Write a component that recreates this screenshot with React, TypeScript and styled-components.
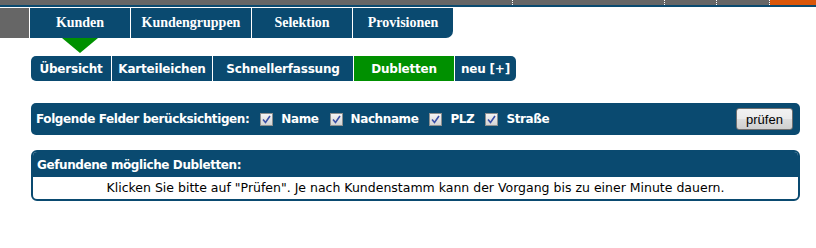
import styled, { createGlobalStyle } from "styled-components";

const blue = "#0a4a70";
const green = "#009000";

const GlobalStyle = createGlobalStyle`
  body {
    margin: 0;
    background: #fff;
    font-family: "DejaVu Sans", Verdana, sans-serif;
  }
`;

const TopStrip = styled.div`
  display: flex;
  height: 5px;
  border-bottom: 2px solid ${blue};
`;

const StripPart = styled.div<{ $w?: number; $orange?: boolean }>`
  flex: ${(p) => (p.$w ? `0 0 ${p.$w}px` : "1")};
  background: ${(p) => (p.$orange ? "#d9560a" : "#666")};
  border-right: 1px dotted #fff;
  &:last-child {
    border-right: none;
  }
`;

const NavRow = styled.div`
  display: flex;
  margin-top: 1px;
  height: 30px;
`;

const NavStub = styled.div`
  width: 29px;
  background: #666;
  margin-right: 1px;
`;

const NavTab = styled.div<{ $w: number; $last?: boolean }>`
  position: relative;
  width: ${(p) => p.$w}px;
  margin-right: 1px;
  background: ${blue};
  color: #fff;
  font-family: "Liberation Serif", "Times New Roman", serif;
  font-weight: bold;
  font-size: 14px;
  display: flex;
  align-items: center;
  justify-content: center;
  border-bottom-right-radius: ${(p) => (p.$last ? "7px" : "0")};
`;

const Arrow = styled.span`
  position: absolute;
  left: 50%;
  top: 30px;
  margin-left: -18px;
  width: 0;
  height: 0;
  border-left: 18px solid transparent;
  border-right: 18px solid transparent;
  border-top: 15px solid ${green};
`;

const Content = styled.div`
  padding: 18px 16px 0 31px;
`;

const SubNav = styled.div`
  display: flex;
  height: 25px;
  margin-bottom: 22px;
`;

const SubTab = styled.div<{ $w: number; $active?: boolean }>`
  width: ${(p) => p.$w}px;
  margin-right: 1px;
  background: ${(p) => (p.$active ? green : blue)};
  color: #fff;
  font-weight: bold;
  font-size: 12px;
  letter-spacing: -0.2px;
  display: flex;
  align-items: center;
  justify-content: center;
  &:first-child {
    border-radius: 5px 0 0 5px;
  }
  &:last-child {
    border-radius: 0 5px 5px 0;
  }
`;

const FilterBar = styled.div`
  display: flex;
  align-items: center;
  height: 32px;
  padding: 0 7px 0 5px;
  background: ${blue};
  border-radius: 5px;
  color: #fff;
  font-weight: bold;
  font-size: 12px;
  letter-spacing: -0.4px;
  margin-bottom: 15px;
`;

const FieldLabel = styled.label`
  display: flex;
  align-items: center;
  margin-left: 11px;
  gap: 8px;
`;

const Box = styled.span`
  width: 11px;
  height: 11px;
  border: 1px solid #8e8f8f;
  background: linear-gradient(#f4f4f4, #d4d4d4);
  display: flex;
  align-items: center;
  justify-content: center;
`;

const CheckButton = styled.button`
  margin-left: auto;
  height: 22px;
  width: 57px;
  padding: 0;
  font-family: "Liberation Sans", Arial, sans-serif;
  font-size: 13px;
  letter-spacing: 0;
  color: #000;
  border: 1px solid #707070;
  border-radius: 3px;
  background: linear-gradient(#f2f2f2 0%, #ebebeb 50%, #dddddd 51%, #cfcfcf 100%);
`;

const ResultPanel = styled.div`
  border: 2px solid ${blue};
  border-radius: 6px;
  overflow: hidden;
`;

const ResultHead = styled.div`
  background: ${blue};
  color: #fff;
  font-weight: bold;
  font-size: 12px;
  letter-spacing: -0.4px;
  height: 25px;
  padding: 0 4px;
  display: flex;
  align-items: center;
`;

const ResultBody = styled.div`
  text-align: center;
  font-size: 12.5px;
  color: #000;
  height: 22px;
  line-height: 21px;
`;

const Check = ({ label }: { label: string }) => (
  <FieldLabel>
    <Box>
      <svg width="9" height="9" viewBox="0 0 9 9">
        <path d="M1 4.5 L3.5 7.5 L8 1" fill="none" stroke="#3a4fa8" strokeWidth="1.6" />
      </svg>
    </Box>
    {label}
  </FieldLabel>
);

export default function App() {
  return (
    <>
      <GlobalStyle />
      <TopStrip>
        <StripPart $w={512} />
        <StripPart $w={151} />
        <StripPart $w={51} />
        <StripPart $w={52} />
        <StripPart $orange />
      </TopStrip>
      <NavRow>
        <NavStub />
        <NavTab $w={100}>
          Kunden
          <Arrow />
        </NavTab>
        <NavTab $w={120}>Kundengruppen</NavTab>
        <NavTab $w={100}>Selektion</NavTab>
        <NavTab $w={100} $last>
          Provisionen
        </NavTab>
      </NavRow>
      <Content>
        <SubNav>
          <SubTab $w={80}>Übersicht</SubTab>
          <SubTab $w={100}>Karteileichen</SubTab>
          <SubTab $w={140}>Schnellerfassung</SubTab>
          <SubTab $w={100} $active>
            Dubletten
          </SubTab>
          <SubTab $w={61}>neu [+]</SubTab>
        </SubNav>
        <FilterBar>
          Folgende Felder berücksichtigen:
          <Check label="Name" />
          <Check label="Nachname" />
          <Check label="PLZ" />
          <Check label="Straße" />
          <CheckButton>prüfen</CheckButton>
        </FilterBar>
        <ResultPanel>
          <ResultHead>Gefundene mögliche Dubletten:</ResultHead>
          <ResultBody>
            Klicken Sie bitte auf "Prüfen". Je nach Kundenstamm kann der Vorgang bis zu einer Minute dauern.
          </ResultBody>
        </ResultPanel>
      </Content>
    </>
  );
}
